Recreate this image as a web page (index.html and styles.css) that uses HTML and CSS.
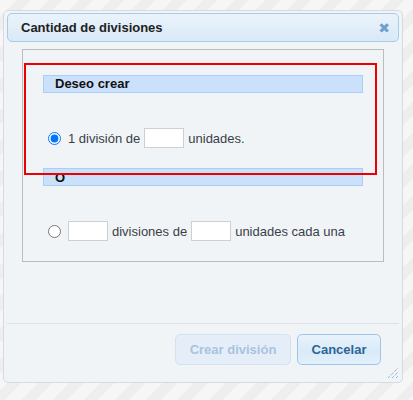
FILE: index.html
```html
<!DOCTYPE html>
<html lang="es">
<head>
    <meta charset="UTF-8">
    <meta name="viewport" content="width=device-width, initial-scale=1.0">
    <title>Cantidad de divisiones</title>
    <link rel="stylesheet" href="styles.css">
</head>
<body>
    <div class="dialog">
        <div class="titlebar">
            <span class="title">Cantidad de divisiones</span>
            <span class="close">&#10006;</span>
        </div>
        <div class="dialog-body">
            <div class="options">
                <div class="bar">Deseo crear</div>
                <div class="row">
                    <input type="radio" name="mode" checked>
                    <span>1 división de</span>
                    <input type="text" class="num">
                    <span>unidades.</span>
                </div>
                <div class="bar bar-or">O</div>
                <div class="row">
                    <input type="radio" name="mode">
                    <input type="text" class="num">
                    <span>divisiones de</span>
                    <input type="text" class="num">
                    <span>unidades cada una</span>
                </div>
            </div>
        </div>
        <div class="buttonpane">
            <button class="btn" disabled>Crear división</button>
            <button class="btn btn-primary">Cancelar</button>
        </div>
        <div class="highlight"></div>
        <svg class="grip" width="12" height="12" viewBox="0 0 12 12">
            <path d="M1 11 L11 1 M5 11 L11 5 M9 11 L11 9" stroke="#6e9fd0" stroke-width="1" stroke-dasharray="1 1"/>
        </svg>
    </div>
</body>
</html>
```

FILE: styles.css
```css
body {
    margin: 0;
    height: 400px;
    font-family: "Liberation Sans", Arial, sans-serif;
    font-size: 13px;
    color: #3a3f47;
    background: repeating-linear-gradient(135deg, #f6f6f6 0px, #f6f6f6 12px, #eeeeee 12px, #eeeeee 22px);
    overflow: hidden;
}
.dialog {
    position: relative;
    box-sizing: border-box;
    width: 400px;
    height: 373px;
    margin: 10px 0 0 3px;
    padding: 2px 3px 0;
    background-color: #f1f4f7;
    border: 1px solid #d6dbe0;
    border-radius: 5px;
    display: flex;
    flex-direction: column;
}
.titlebar {
    height: 29px;
    box-sizing: border-box;
    padding: 0 8px 0 13px;
    display: flex;
    align-items: center;
    justify-content: space-between;
    background: linear-gradient(#eaf3fb, #d9e9f7);
    border: 1px solid #a9cbe8;
    border-radius: 5px;
}
.title {
    font-weight: bold;
    color: #222;
}
.close {
    color: #6f9fcc;
    font-size: 14px;
    font-family: "DejaVu Sans", sans-serif;
    font-weight: bold;
}
.dialog-body {
    flex: 1;
    padding: 7px 15px 0;
}
.options {
    height: 213px;
    box-sizing: border-box;
    border: 1px solid #bcbcbc;
    padding: 25px 20px 0;
}
.bar {
    height: 18px;
    box-sizing: border-box;
    padding-left: 11px;
    background-color: #cbe0fb;
    border: 1px solid #a9cff6;
    font-weight: bold;
    color: #111;
    line-height: 16px;
}
.bar-or {
    margin-top: 20px;
    line-height: 18px;
}
.row {
    margin-top: 35px;
    height: 20px;
    display: flex;
    align-items: center;
    gap: 4px;
}
.row input[type="radio"] {
    width: 13px;
    height: 13px;
    margin: 0 3px 0 5px;
}
.num {
    width: 40px;
    height: 20px;
    box-sizing: border-box;
    border: 1px solid #cfcfcf;
    background-color: #fff;
    padding: 0;
}
.buttonpane {
    border-top: 1px solid #dde1e5;
    padding: 10px 18px 17px 0;
    display: flex;
    justify-content: flex-end;
    gap: 6px;
}
.btn {
    height: 31px;
    padding: 0;
    white-space: nowrap;
    font-family: "Liberation Sans", Arial, sans-serif;
    font-size: 13px;
    font-weight: bold;
    border-radius: 5px;
    cursor: pointer;
}
.btn[disabled] {
    width: 116px;
    color: #a8c4de;
    background-color: #e5eef8;
    border: 1px solid #d3e2f0;
    cursor: default;
}
.btn-primary {
    width: 84px;
    color: #2c6596;
    background: linear-gradient(#e9f3fc, #d9eaf8 55%, #e3f0fb);
    border: 1px solid #9fc5e6;
}
.highlight {
    position: absolute;
    left: 20px;
    top: 52px;
    width: 349px;
    height: 108px;
    border: 2px solid #ee0000;
}
.grip {
    position: absolute;
    right: 3px;
    bottom: 3px;
}
```
